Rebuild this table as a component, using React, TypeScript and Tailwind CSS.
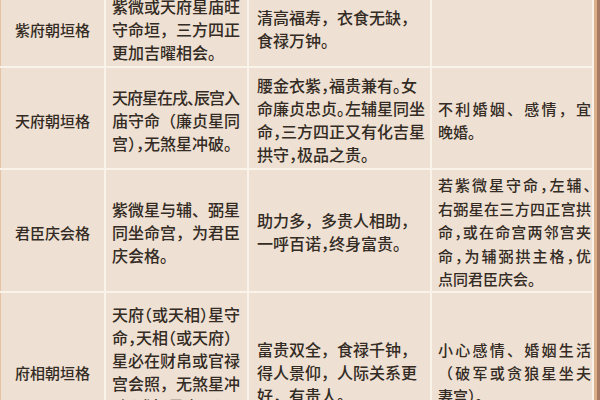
import React from "react";

const F = "font-['Noto_Sans_CJK_SC',sans-serif]";

function L({ children, h, j, t }: { children: React.ReactNode; h?: boolean; j?: boolean; t?: boolean }) {
  return (
    <div
      className={[
        "whitespace-nowrap",
        h ? "[font-feature-settings:'halt']" : "",
        j ? "text-justify [text-align-last:justify]" : "",
        t ? "tracking-[-1px]" : "",
      ].join(" ")}
    >
      {children}
    </div>
  );
}

function NameCell({ children, pt }: { children: React.ReactNode; pt?: string }) {
  return (
    <div className={`bg-[#eee0d2] border-l border-[#e6c3a4] flex items-center justify-center text-[15px] leading-[23px] ${pt ?? ""}`}>
      {children}
    </div>
  );
}

export default function App() {
  return (
    <div className={`w-[600px] h-[400px] overflow-hidden bg-[#eee0d2] text-[#332b24] font-medium ${F}`}>
      <div className="flex -mt-[8px]">
        <div className="grid grid-cols-[104px_141px_181px_160px] grid-rows-[74px_100px_121px_158px] gap-[2px] bg-[#faf3ea] border-r-2 border-[#faf3ea] w-[594px] shrink-0">
          {/* Row 1 */}
          <NameCell>紫府朝垣格</NameCell>
          <div className="bg-[#eee0d2] flex items-center pl-[6px] text-[16px] leading-[23px]">
            <div>
              <L>紫微或天府星庙旺</L>
              <L>守命垣，三方四正</L>
              <L>更加吉曜相会。</L>
            </div>
          </div>
          <div className="bg-[#eee0d2] flex items-center pl-[8px] text-[16px] leading-[23px]">
            <div>
              <L>清高福寿，衣食无缺，</L>
              <L>食禄万钟。</L>
            </div>
          </div>
          <div className="bg-[#eee0d2]"></div>

          {/* Row 2 */}
          <NameCell pt="pt-[4px]">天府朝垣格</NameCell>
          <div className="bg-[#eee0d2] flex items-center pl-[6px] pt-[4px] text-[16px] leading-[23px]">
            <div>
              <L h t>天府星在戌、辰宫入</L>
              <L>庙守命（廉贞星同</L>
              <L h>宫），无煞星冲破。</L>
            </div>
          </div>
          <div className="bg-[#eee0d2] flex items-center pl-[8px] pt-[4px] text-[16px] leading-[23px]">
            <div>
              <L h>腰金衣紫，福贵兼有。女</L>
              <L h>命廉贞忠贞。左辅星同坐</L>
              <L h>命，三方四正又有化吉星</L>
              <L h>拱守，极品之贵。</L>
            </div>
          </div>
          <div className="bg-[#eee0d2] flex items-center pl-[6px] pt-[4px] text-[15px] leading-[23px]">
            <div className="w-[153px]">
              <L j>不利婚姻、感情，宜</L>
              <L>晚婚。</L>
            </div>
          </div>

          {/* Row 3 */}
          <NameCell pt="pt-[3px]">君臣庆会格</NameCell>
          <div className="bg-[#eee0d2] flex items-center pl-[6px] pt-[3px] text-[16px] leading-[23px]">
            <div>
              <L>紫微星与辅、弼星</L>
              <L>同坐命宫，为君臣</L>
              <L>庆会格。</L>
            </div>
          </div>
          <div className="bg-[#eee0d2] flex items-center pl-[8px] pt-[3px] text-[16px] leading-[23px]">
            <div>
              <L>助力多，多贵人相助，</L>
              <L h>一呼百诺，终身富贵。</L>
            </div>
          </div>
          <div className="bg-[#eee0d2] flex items-center pl-[6px] pt-[3px] text-[15px] leading-[23.5px]">
            <div className="w-[153px]">
              <L h j>若紫微星守命，左辅、</L>
              <L j>右弼星在三方四正宫拱</L>
              <L h j>命，或在命宫两邻宫夹</L>
              <L h j>命，为辅弼拱主格，优</L>
              <L h>点同君臣庆会。</L>
            </div>
          </div>

          {/* Row 4 */}
          <NameCell>府相朝垣格</NameCell>
          <div className="bg-[#eee0d2] flex items-center pl-[6px] text-[16px] leading-[23px]">
            <div>
              <L h>天府（或天相）星守</L>
              <L h>命，天相（或天府）</L>
              <L>星必在财帛或官禄</L>
              <L>宫会照，无煞星冲</L>
              <L h>破（或相星亦是）</L>
              <L>为府相朝垣格。</L>
            </div>
          </div>
          <div className="bg-[#eee0d2] flex items-center pl-[8px] text-[16px] leading-[23px]">
            <div>
              <L>富贵双全，食禄千钟，</L>
              <L>得人景仰，人际关系更</L>
              <L>好，有贵人。</L>
            </div>
          </div>
          <div className="bg-[#eee0d2] flex items-center pl-[6px] text-[15px] leading-[23px]">
            <div className="w-[153px]">
              <L j>小心感情、婚姻生活</L>
              <L j>（破军或贪狼星坐夫</L>
              <L>妻宫）。</L>
            </div>
          </div>
        </div>
        <div className="w-[3px] bg-[#dcae8a] shrink-0"></div>
        <div className="w-[3px] bg-[#a67b61] shrink-0"></div>
      </div>
    </div>
  );
}
